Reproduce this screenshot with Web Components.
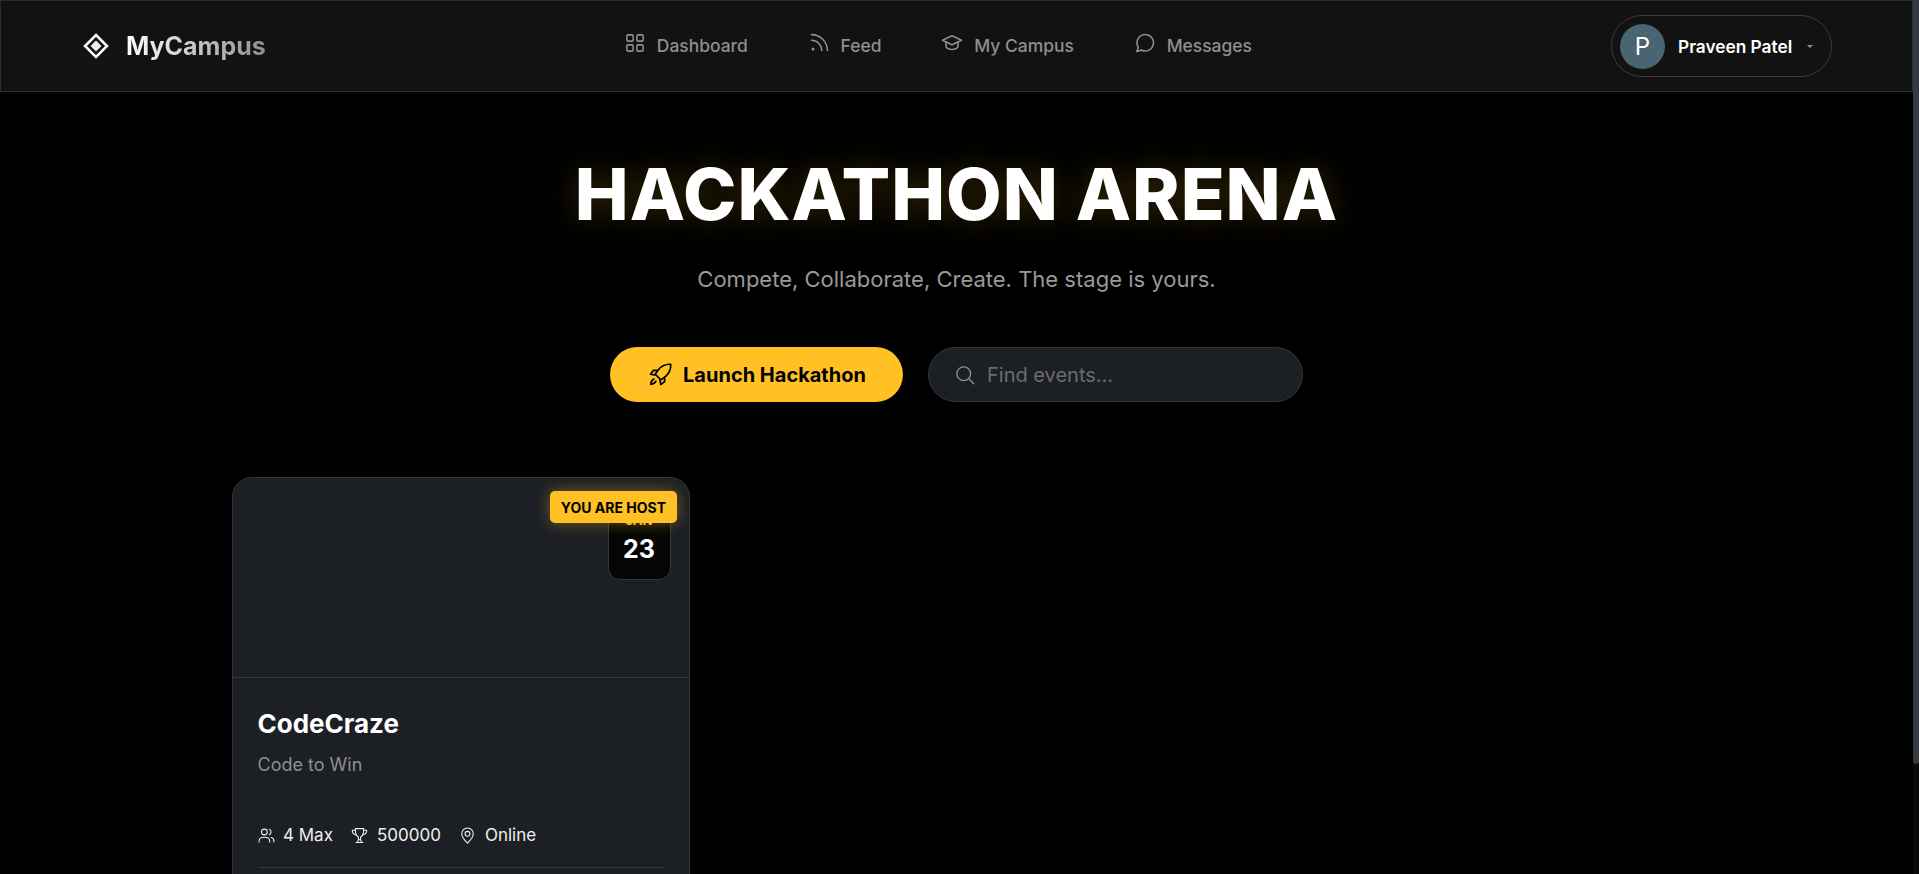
<!DOCTYPE html>
<html lang="en">
<head>
<meta charset="utf-8">
<title>Hackathon Arena</title>
<style>
    html { background: #000; }
    body {
        margin: 0;
        display: flex;
        height: 100vh;
        overflow: hidden;
        background: #000;
        color: #fff;
        font-family: "Inter", "Liberation Sans", sans-serif;
    }
    main { flex: 1; min-width: 0; height: 100%; overflow: hidden; }
</style>
</head>
<body>
<main>
    <campus-navbar>
        <nav-link label="Dashboard" icon="grid"></nav-link>
        <nav-link label="Feed" icon="rss"></nav-link>
        <nav-link label="My Campus" icon="mortarboard"></nav-link>
        <nav-link label="Messages" icon="chat"></nav-link>
    </campus-navbar>
    <arena-hero></arena-hero>
    <event-grid>
        <event-card title="CodeCraze" tagline="Code to Win" month="JAN" day="23" team="4 Max" prize="500000" place="Online"></event-card>
    </event-grid>
</main>
<page-scrollbar></page-scrollbar>

<script>
// ---- shared icons (16 x 16 grid) ----
const ICONS = {
    grid: `<rect x="1.5" y="1.5" width="5" height="5" rx="1"/><rect x="9.5" y="1.5" width="5" height="5" rx="1"/><rect x="1.5" y="9.5" width="5" height="5" rx="1"/><rect x="9.5" y="9.5" width="5" height="5" rx="1"/>`,
    rss: `<path d="M2 1.300a12.700 12.700 0 0 1 12.700 12.700"/><path d="M2 5.800a8.200 8.200 0 0 1 8.200 8.200"/><circle cx="3.200" cy="12.800" r="1.200" fill="currentColor" stroke="none"/>`,
    mortarboard: `<path d="M8 2.200.4 5.800 8 9.400l7.600-3.600z"/><path d="M3.200 7.300v3.300c0 1.300 2.200 2.600 4.800 2.600s4.800-1.300 4.800-2.600V7.300"/>`,
    chat: `<path d="M2.700 11.500A6.600 6.600 0 1 1 5 13.600c-1.100.6-2.300 1-3.700 1.100.7-1 1.200-2 1.400-3.200z"/>`,
    rocket: `<path d="M14.600 1.400c-3.600-.2-6 1.200-7.800 3.600L5 7.500l3.500 3.500 2.500-1.800c2.400-1.800 3.800-4.200 3.600-7.800z"/><path d="M5.900 5.200H3.800L2.200 7.500l2.400.5"/><path d="M10.800 10.100v2.100l-2.300 1.600-.5-2.400"/><path d="M4.200 10.500c-1.100.5-1.800 2-1.900 3.200 1.200-.1 2.700-.8 3.200-1.900"/>`,
    search: `<circle cx="7" cy="7" r="5.500"/><path d="m11 11 4 4"/>`,
    people: `<circle cx="6" cy="4.700" r="2.700"/><path d="M1 14v-.8C1 11 3 9.600 6 9.600s5 1.400 5 3.600v.8"/><path d="M10.600 2.200a2.700 2.700 0 0 1 0 5"/><path d="M12.400 9.900c1.600.5 2.600 1.700 2.600 3.300v.8"/>`,
    trophy: `<path d="M4 1.500h8c0 3.200-.3 7-3 8v2.500H7V9.500c-2.700-1-3-4.800-3-8z"/><path d="M4 3H1.200c0 2.400 1.300 4 3.500 4.300"/><path d="M12 3h2.800c0 2.400-1.300 4-3.500 4.300"/><path d="M4.700 14.500h6.600M6 14.500l1-2.500M10 14.500 9 12"/>`,
    geo: `<path d="M8 15.200S2.600 10 2.600 6.400a5.400 5.400 0 0 1 10.800 0C13.400 10 8 15.200 8 15.200z"/><circle cx="8" cy="6.400" r="2.300"/>`
};

function icon(name, size, sw) {
    return `<svg part="icon" width="${size}" height="${size}" viewBox="0 0 16 16" fill="none" stroke="currentColor" stroke-width="${sw || 1}" stroke-linecap="round" stroke-linejoin="round" aria-hidden="true">${ICONS[name]}</svg>`;
}

// ---- nav link ----
class NavLink extends HTMLElement {
    connectedCallback() {
        this.attachShadow({ mode: "open" }).innerHTML = `
            <style>
                :host { display: block; }
                a {
                    display: flex;
                    align-items: baseline;
                    gap: 12px;
                    padding: 8px 30.400px;
                    color: #8e8e93;
                    font-size: 17.440px;
                    font-weight: 500;
                    line-height: 24px;
                    text-decoration: none;
                    white-space: nowrap;
                }
                svg { display: block; align-self: flex-start; margin-top: -1px; }
            </style>
            <a href="#">${icon(this.getAttribute("icon"), 20, 1.250)}<span>${this.getAttribute("label")}</span></a>`;
    }
}
customElements.define("nav-link", NavLink);

// ---- top bar ----
class CampusNavbar extends HTMLElement {
    connectedCallback() {
        this.attachShadow({ mode: "open" }).innerHTML = `
            <style>
                :host {
                    display: flex;
                    justify-content: space-between;
                    align-items: center;
                    height: 92px;
                    box-sizing: border-box;
                    padding: 0 80px 0 82px;
                    background: #121212;
                    border: 1px solid #2c2c2e;
                }
                .brand { display: flex; align-items: center; gap: 17px; }
                .brand svg { display: block; }
                .brand span {
                    font-size: 25px;
                    font-weight: 700;
                    line-height: 32px;
                    background: linear-gradient(90deg, #fff, #8e8e93);
                    -webkit-background-clip: text;
                    background-clip: text;
                    color: transparent;
                }
                nav { display: flex; }
                .profile {
                    display: flex;
                    align-items: center;
                    box-sizing: border-box;
                    width: 221px;
                    height: 62px;
                    padding: 0 8px;
                    border: 1px solid #3a3a3c;
                    border-radius: 31px;
                    font-size: 17.280px;
                    font-weight: 600;
                    color: #fff;
                    white-space: nowrap;
                }
                .avatar {
                    width: 45px;
                    height: 45px;
                    margin-right: 13px;
                    border-radius: 50%;
                    background: #4a6572;
                    display: flex;
                    align-items: center;
                    justify-content: center;
                    font-size: 24px;
                    font-weight: 400;
                }
                .caret {
                    margin-left: 15px;
                    width: 0;
                    height: 0;
                    border: 3px solid transparent;
                    border-top: 3px solid #8e8e93;
                    border-bottom: 0;
                }
            </style>
            <div class="brand">
                <svg width="26" height="26" viewBox="0 0 26 26" aria-hidden="true">
                    <path d="M13 2 24 13 13 24 2 13z" fill="none" stroke="#fff" stroke-width="2.500"/>
                    <path d="M13 7.500 18.500 13 13 18.500 7.500 13z" fill="#ececec"/>
                </svg>
                <span>MyCampus</span>
            </div>
            <nav><slot></slot></nav>
            <div class="profile">
                <div class="avatar">P</div>
                <span>Praveen Patel</span>
                <span class="caret"></span>
            </div>`;
    }
}
customElements.define("campus-navbar", CampusNavbar);

// ---- hero block ----
class ArenaHero extends HTMLElement {
    connectedCallback() {
        this.attachShadow({ mode: "open" }).innerHTML = `
            <style>
                :host {
                    display: flex;
                    flex-direction: column;
                    align-items: center;
                    padding-top: 62px;
                }
                h1 {
                    margin: 0;
                    font-size: 72px;
                    font-weight: 800;
                    line-height: 80px;
                    letter-spacing: 1px;
                    color: #fff;
                    text-shadow: 0 0 30px rgba(255, 193, 37, .22);
                }
                p {
                    margin: 29px 0 0;
                    font-size: 22px;
                    line-height: 32px;
                    color: #999;
                }
                .actions {
                    display: flex;
                    gap: 25px;
                    margin-top: 52px;
                }
                button {
                    display: flex;
                    align-items: center;
                    justify-content: center;
                    gap: 10px;
                    width: 293px;
                    height: 55px;
                    border: 0;
                    border-radius: 28px;
                    background: #ffc124;
                    color: #000;
                    font: 700 20px "Inter", "Liberation Sans", sans-serif;
                }
                .search {
                    display: flex;
                    align-items: center;
                    gap: 12px;
                    box-sizing: border-box;
                    width: 375px;
                    height: 55px;
                    padding: 0 26px;
                    background: #1c1f24;
                    border: 1px solid #34373c;
                    border-radius: 28px;
                    color: #8e8e93;
                }
                input {
                    flex: 1;
                    min-width: 0;
                    border: 0;
                    outline: 0;
                    padding: 0;
                    background: transparent;
                    color: #fff;
                    font: 400 20px "Inter", "Liberation Sans", sans-serif;
                }
                input::placeholder { color: #6c6c70; opacity: 1; }
            </style>
            <h1>HACKATHON ARENA</h1>
            <p>Compete, Collaborate, Create. The stage is yours.</p>
            <div class="actions">
                <button>${icon("rocket", 26, 1.050)}<span>Launch Hackathon</span></button>
                <label class="search">${icon("search", 20, 1.100)}<input placeholder="Find events..."></label>
            </div>`;
    }
}
customElements.define("arena-hero", ArenaHero);

// ---- cards grid ----
class EventGrid extends HTMLElement {
    connectedCallback() {
        this.attachShadow({ mode: "open" }).innerHTML = `
            <style>
                :host {
                    display: grid;
                    grid-template-columns: repeat(3, 1fr);
                    gap: 38px;
                    box-sizing: border-box;
                    max-width: 1450px;
                    margin: 75px auto 0;
                }
            </style>
            <slot></slot>`;
    }
}
customElements.define("event-grid", EventGrid);

// ---- event card ----
class EventCard extends HTMLElement {
    connectedCallback() {
        const a = (n) => this.getAttribute(n);
        this.attachShadow({ mode: "open" }).innerHTML = `
            <style>
                :host {
                    display: block;
                    position: relative;
                    box-sizing: border-box;
                    height: 523px;
                    background: #1c1f24;
                    border: 1px solid #34373c;
                    border-radius: 20px;
                }
                .cover { height: 199px; border-bottom: 1px solid #34373c; }
                .date {
                    position: absolute;
                    top: 15px;
                    right: 18px;
                    box-sizing: border-box;
                    width: 63px;
                    height: 87px;
                    display: flex;
                    flex-direction: column;
                    align-items: center;
                    justify-content: flex-end;
                    padding-bottom: 15px;
                    background: #050505;
                    border: 1px solid #34373c;
                    border-radius: 12px;
                }
                .date small { font-size: 13px; font-weight: 700; color: #ffc124; line-height: 18px; margin-bottom: 5px; }
                .date b { font-size: 25px; font-weight: 700; line-height: 30px; color: #fff; }
                .badge {
                    position: absolute;
                    top: 13px;
                    right: 12px;
                    padding: 0 10.500px;
                    height: 32px;
                    display: flex;
                    align-items: center;
                    background: #ffc124;
                    color: #000;
                    border-radius: 5px;
                    font-size: 14px;
                    font-weight: 700;
                    white-space: nowrap;
                    box-shadow: 0 0 15px rgba(255, 193, 37, .4);
                }
                .body { padding: 30px 25px 0; }
                h3 { margin: 0; font-size: 26px; font-weight: 700; line-height: 32px; color: #fff; }
                .tag { margin: 13px 0 0; font-size: 18px; line-height: 24px; color: #8e8e93; }
                .meta {
                    display: flex;
                    gap: 18.500px;
                    margin-top: 46px;
                    padding-bottom: 20px;
                    border-bottom: 1px solid #34373c;
                    font-size: 17px;
                    line-height: 24px;
                    color: #f0f0f0;
                }
                .meta span { display: flex; align-items: center; gap: 8.500px; white-space: nowrap; }
            </style>
            <div class="cover"></div>
            <div class="date"><small>${a("month")}</small><b>${a("day")}</b></div>
            <div class="badge">YOU ARE HOST</div>
            <div class="body">
                <h3>${a("title")}</h3>
                <p class="tag">${a("tagline")}</p>
                <div class="meta">
                    <span>${icon("people", 17)}${a("team")}</span>
                    <span>${icon("trophy", 17)}${a("prize")}</span>
                    <span>${icon("geo", 17)}${a("place")}</span>
                </div>
            </div>`;
    }
}
customElements.define("event-card", EventCard);

// ---- page scrollbar rail ----
class PageScrollbar extends HTMLElement {
    connectedCallback() {
        this.attachShadow({ mode: "open" }).innerHTML = `
            <style>
                :host { display: block; flex: 0 0 6px; height: 100%; background: #0a0a0a; }
                div { height: 764px; background: #343a40; border-radius: 0 0 3px 3px; }
            </style>
            <div></div>`;
    }
}
customElements.define("page-scrollbar", PageScrollbar);
</script>
</body>
</html>
